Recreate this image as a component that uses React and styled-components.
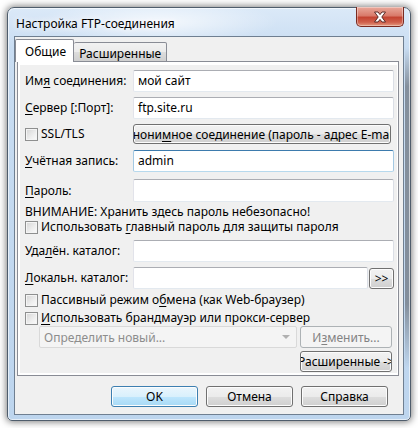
import styled, { createGlobalStyle } from "styled-components";

const Global = createGlobalStyle`
  html, body {
    margin: 0;
    background: #ffffff;
  }
  body {
    font-family: "Noto Sans", "Liberation Sans", sans-serif;
    font-size: 12px;
    color: #000;
  }
`;

const Page = styled.div`
  padding: 7px 0 0 7px;
  height: 428px;
  box-sizing: border-box;
`;

const Window = styled.div`
  width: 404px;
  height: 414px;
  box-sizing: border-box;
  border: 1px solid #4f5d6c;
  border-radius: 7px 7px 5px 5px;
  padding: 0 6px 5px 6px;
  display: flex;
  flex-direction: column;
  background:
    linear-gradient(180deg, rgba(110,118,128,0) 0%, rgba(110,118,128,0.75) 12%, rgba(110,118,128,0.75) 80%, rgba(110,118,128,0) 100%) right 0 top 40px / 5px 320px no-repeat,
    radial-gradient(ellipse 120px 22px at 150px 14px, rgba(255,255,255,0.75), rgba(255,255,255,0)),
    linear-gradient(180deg, #dbe9f8 0%, #c9ddf2 40px, #bdd5ee 100%);
  box-shadow: 0 0 7px 1px rgba(0, 0, 0, 0.5), inset 0 0 0 1px rgba(255,255,255,0.6);
`;

const TitleBar = styled.div`
  height: 28px;
  flex-shrink: 0;
  display: flex;
  align-items: flex-start;
`;

const Caption = styled.div`
  padding: 7px 0 0 2px;
  font-size: 12px;
  text-shadow: 0 0 6px #fff, 0 0 10px #fff;
`;

const CloseBtn = styled.div`
  margin: -1px 0 0 auto;
  width: 48px;
  height: 20px;
  box-sizing: border-box;
  border: 1px solid #7a2a20;
  border-top: none;
  border-radius: 0 0 5px 5px;
  background: linear-gradient(180deg, #e9a99b 0%, #d97b6b 45%, #c44432 55%, #d0604c 80%, #e49a80 100%);
  box-shadow: inset 0 0 0 1px rgba(255,255,255,0.35);
  display: flex;
  align-items: center;
  justify-content: center;
`;

const Client = styled.div`
  flex: 1;
  background: #f0f0f0;
  border: 1px solid #6f7f91;
  display: flex;
  flex-direction: column;
  padding-top: 2px;
`;

const Tabs = styled.div`
  display: flex;
  align-items: flex-end;
  height: 22px;
  position: relative;
  z-index: 1;
`;

const Tab = styled.div`
  box-sizing: border-box;
  height: ${(p) => (p.$active ? "23px" : "20px")};
  margin-bottom: -1px;
  padding: ${(p) => (p.$active ? "3px 7px 0 9px" : "2px 5px 0 5px")};
  border: 1px solid #898c95;
  border-bottom: ${(p) => (p.$active ? "none" : "1px solid #898c95")};
  border-left: ${(p) => (p.$active ? "1px solid #898c95" : "none")};
  background: ${(p) =>
    p.$active ? "#ffffff" : "linear-gradient(180deg, #f2f2f2 0%, #ebebeb 50%, #dddddd 51%, #cfcfcf 100%)"};
  border-radius: 2px 2px 0 0;
  font-size: 12px;
`;

const Panel = styled.div`
  margin: 0 4px 0 2px;
  border: 1px solid #898c95;
  background: #ffffff;
  padding: 3px 1px 2px 2px;
`;

const Sheet = styled.div`
  background: #f0f0f0;
  height: 308px;
  display: flex;
  flex-direction: column;
  padding-left: 5px;
  padding-right: 3px;
`;

const Row = styled.div`
  display: flex;
  align-items: center;
  height: ${(p) => p.$h || 22}px;
  line-height: ${(p) => p.$h || 22}px;
  margin-top: ${(p) => p.$mt || 0}px;
  flex-shrink: 0;
  white-space: nowrap;
`;

const Label = styled.div`
  width: 108px;
  flex-shrink: 0;
  white-space: nowrap;
`;

const CheckLabel = styled.div`
  width: 108px;
  flex-shrink: 0;
  display: flex;
  align-items: center;
`;

const U = styled.span`
  text-decoration: underline;
  text-underline-offset: 2px;
`;

const Input = styled.div`
  box-sizing: border-box;
  width: ${(p) => p.$w || 261}px;
  height: ${(p) => p.$h || 22}px;
  border: 1px solid;
  border-color: ${(p) =>
    p.$focus ? "#3d7bad #a4c9e3 #b7d9ed #a4c9e3" : "#abadb3 #dbdfe6 #e3e9ef #e2e3ea"};
  border-radius: 2px;
  background: #fff;
  padding: 0 4px;
  line-height: ${(p) => (p.$h || 22) - 2}px;
  white-space: nowrap;
`;

const Box = styled.span`
  box-sizing: border-box;
  width: 13px;
  height: 13px;
  flex-shrink: 0;
  border: 1px solid #8e8f8f;
  background: linear-gradient(135deg, #d4d4d4 0%, #eeeeee 60%, #fbfbfb 100%);
  box-shadow: inset 0 0 0 1px #f4f4f4;
  margin-right: 3px;
`;

const Button = styled.div`
  box-sizing: border-box;
  width: ${(p) => p.$w}px;
  height: ${(p) => p.$h || 21}px;
  flex-shrink: 0;
  border: 1px solid ${(p) => (p.$primary ? "#3c7fb1" : p.$disabled ? "#adb2b5" : "#707070")};
  border-radius: 3px;
  background: ${(p) =>
    p.$primary
      ? "linear-gradient(180deg, #eaf6fd 0%, #d9f0fc 50%, #bee6fd 51%, #a7d9f5 100%)"
      : p.$disabled
      ? "#f4f4f4"
      : "linear-gradient(180deg, #f2f2f2 0%, #ebebeb 50%, #dddddd 51%, #cfcfcf 100%)"};
  box-shadow: inset 0 0 0 1px ${(p) => (p.$disabled ? "#f4f4f4" : "#fcfcfc")};
  color: ${(p) => (p.$disabled ? "#838383" : "#000")};
  display: flex;
  align-items: center;
  justify-content: center;
  overflow: hidden;
  white-space: nowrap;
  line-height: normal;
  margin-left: ${(p) => p.$ml || 0}px;
`;

const Clip = styled.span`
  flex-shrink: 0;
`;

const Combo = styled.div`
  box-sizing: border-box;
  width: 258px;
  height: 22px;
  margin-left: 14px;
  border: 1px solid #d9d9d9;
  border-radius: 2px;
  background: #f4f4f4;
  color: #8d8d8d;
  display: flex;
  align-items: center;
  padding-left: 4px;
  line-height: normal;
`;

const Arrow = styled.span`
  margin-left: auto;
  margin-right: 6px;
  width: 0;
  height: 0;
  border-left: 4px solid transparent;
  border-right: 4px solid transparent;
  border-top: 4px solid #b0b0b0;
`;

const Footer = styled.div`
  display: flex;
  justify-content: flex-end;
  gap: 8px;
  margin-top: 10px;
  padding-right: 15px;
`;

const Check = ({ children }) => (
  <>
    <Box />
    <span>{children}</span>
  </>
);

export default function App() {
  return (
    <Page>
      <Global />
      <Window>
        <TitleBar>
          <Caption>Настройка FTP-соединения</Caption>
          <CloseBtn>
            <svg width="14" height="12" viewBox="0 0 14 12">
              <path
                d="M1.5 1 H5 L7 3.6 L9 1 H12.5 L8.8 6 L12.5 11 H9 L7 8.4 L5 11 H1.5 L5.2 6 Z"
                fill="#ffffff"
                stroke="#5a2a26"
                strokeWidth="1"
                strokeLinejoin="round"
              />
            </svg>
          </CloseBtn>
        </TitleBar>
        <Client>
          <Tabs>
            <Tab $active>Общие</Tab>
            <Tab>Расширенные</Tab>
          </Tabs>
          <Panel>
            <Sheet>
              <Row $mt={5}>
                <Label>Им<U>я</U> соединения:</Label>
                <Input>мой сайт</Input>
              </Row>
              <Row $mt={5}>
                <Label><U>С</U>ервер [:Порт]:</Label>
                <Input>ftp.site.ru</Input>
              </Row>
              <Row $mt={5} $h={20}>
                <CheckLabel><Check>SSL/TLS</Check></CheckLabel>
                <Button $w={258} $h={20}>
                  <Clip>Анони<U>м</U>ное соединение (пароль - адрес E-mail)</Clip>
                </Button>
              </Row>
              <Row $mt={6}>
                <Label><U>У</U>чётная запись:</Label>
                <Input $focus>admin</Input>
              </Row>
              <Row $mt={7} $h={23}>
                <Label><U>П</U>ароль:</Label>
                <Input $h={23} />
              </Row>
              <Row $mt={3} $h={14}>ВНИМАНИЕ: Хранить здесь пароль небезопасно!</Row>
              <Row $mt={1} $h={14}>
                <Check>Использовать <U>г</U>лавный пароль для защиты пароля</Check>
              </Row>
              <Row $mt={6}>
                <Label>Уда<U>л</U>ён. каталог:</Label>
                <Input />
              </Row>
              <Row $mt={5}>
                <Label><U>Л</U>окальн. каталог:</Label>
                <Input $w={235} />
                <Button $w={25} $h={21} $ml={1}>&gt;&gt;</Button>
              </Row>
              <Row $mt={4} $h={14}>
                <Check>Пассивный режим о<U>б</U>мена (как Web-браузер)</Check>
              </Row>
              <Row $mt={4} $h={14}>
                <Check><U>И</U>спользовать брандмауэр или прокси-сервер</Check>
              </Row>
              <Row $mt={1}>
                <Combo>
                  Определить новый...
                  <Arrow />
                </Combo>
                <Button $w={92} $h={22} $ml={3} $disabled>
                  <span>И<U>з</U>менить...</span>
                </Button>
              </Row>
              <Row $mt={3} $h={21}>
                <Button $w={92} $h={21} $ml={275}>
                  <Clip>Расширенные -&gt;</Clip>
                </Button>
              </Row>
            </Sheet>
          </Panel>
          <Footer>
            <Button $w={87} $primary>OK</Button>
            <Button $w={87}>Отмена</Button>
            <Button $w={87}>Справка</Button>
          </Footer>
        </Client>
      </Window>
    </Page>
  );
}
